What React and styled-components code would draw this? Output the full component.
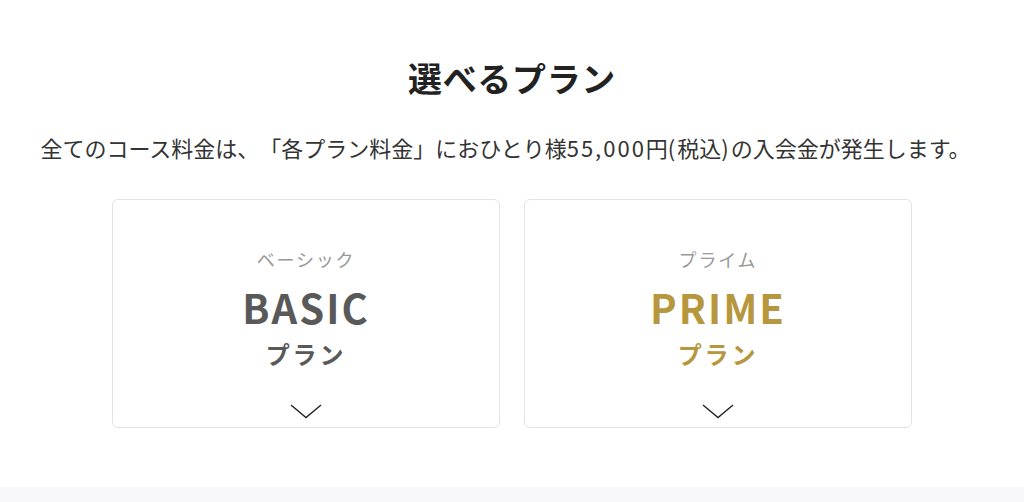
import React from "react";
import styled, { createGlobalStyle } from "styled-components";

const Global = createGlobalStyle`
  html, body { margin:0; padding:0; background:#fff; }
  body { font-family:"Noto Sans CJK JP","Noto Sans",sans-serif; color:#333; }
`;

const Section = styled.section`
  display:flex; flex-direction:column; align-items:center;
  padding:52px 0 59px;
`;

const Title = styled.h2`
  margin:0;
  font-size:34px; line-height:51px; font-weight:700;
  color:#222; letter-spacing:0.02em;
`;

const Lead = styled.p`
  margin:27px 13px 0 0;
  font-size:22px; line-height:35px; font-weight:400;
  color:#333;
  text-spacing-trim:space-all;
  white-space:nowrap;
`;

const Num = styled.span`
  letter-spacing:2px;
`;

const Cards = styled.div`
  display:flex; gap:24px;
  margin-top:34px;
`;

const Card = styled.button`
  width:388px; height:229px; box-sizing:border-box;
  display:flex; flex-direction:column; align-items:center;
  padding:46px 0 0;
  background:#fff;
  border:1px solid #e3e3e3; border-radius:6px;
  font-family:inherit; cursor:pointer;
`;

const Kana = styled.span`
  font-size:18px; line-height:27px; color:#999;
  letter-spacing:0.1em;
`;

const Name = styled.span`
  margin-top:8px;
  font-size:40px; line-height:52px; font-weight:700;
  letter-spacing:2px;
  color:${p => p.$color};
`;

const Plan = styled.span`
  margin-top:4px;
  font-size:24px; line-height:34px; font-weight:700;
  letter-spacing:0.12em;
  color:${p => p.$color};
`;

const Chevron = styled.svg`
  margin-top:33px;
  width:32px; height:15px;
`;

const Band = styled.div`
  height:16px; background:#f8f8fa;
`;

const plans = [
  { kana:"ベーシック", name:"BASIC", color:"#595959" },
  { kana:"プライム", name:"PRIME", color:"#b7973d" },
];

export default function App(){
  return (
    <>
      <Global />
      <Section>
        <Title>選べるプラン</Title>
        <Lead>
          全てのコース料金は、「各プラン料金」におひとり様<Num>55,000</Num>円<Num>(</Num>税込<Num>)</Num>の入会金が発生します。
        </Lead>
        <Cards>
          {plans.map(p => (
            <Card key={p.name}>
              <Kana>{p.kana}</Kana>
              <Name $color={p.color}>{p.name}</Name>
              <Plan $color={p.color}>プラン</Plan>
              <Chevron viewBox="0 0 32 15">
                <polyline points="1,1 16,13.5 31,1" fill="none" stroke="#222" strokeWidth="1.4" />
              </Chevron>
            </Card>
          ))}
        </Cards>
      </Section>
      <Band />
    </>
  );
}
